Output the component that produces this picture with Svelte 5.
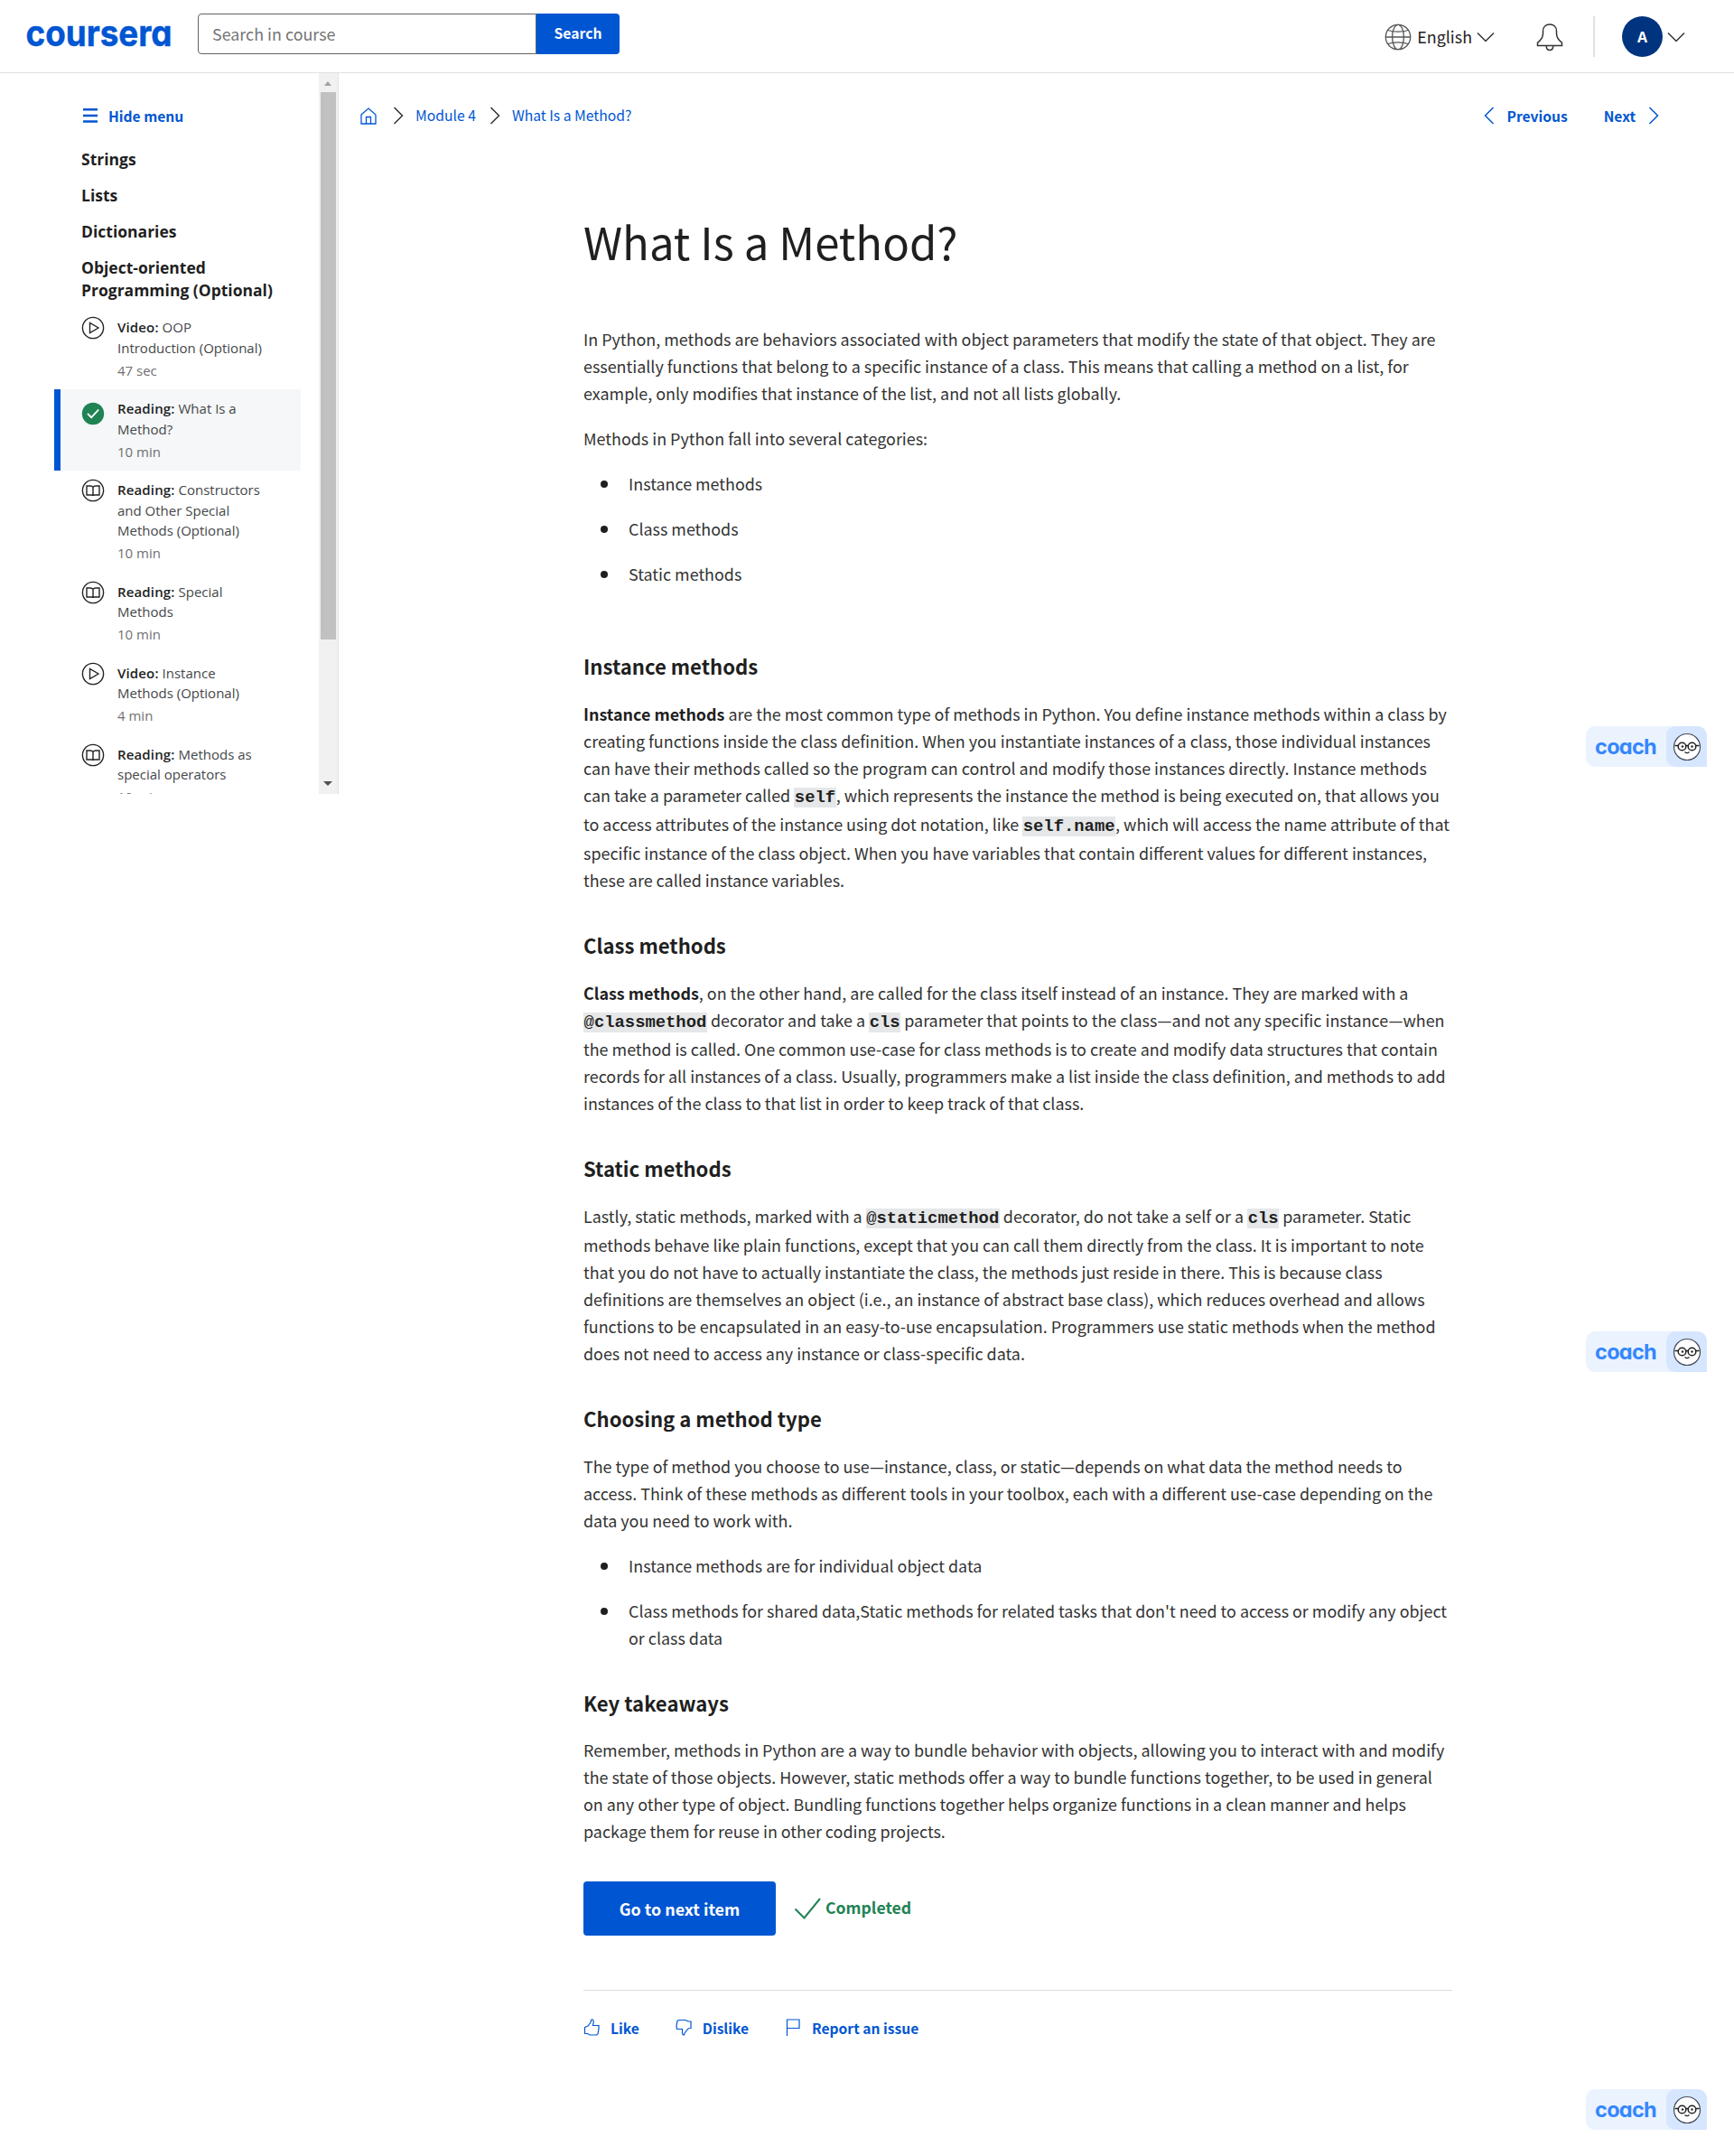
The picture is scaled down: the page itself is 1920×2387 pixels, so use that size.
<script>
  const topics = ['Strings', 'Lists', 'Dictionaries', 'Object-oriented Programming (Optional)'];
  const items = [
    { kind: 'Video', icon: 'play', title: 'OOP Introduction (Optional)', time: '47 sec' },
    { kind: 'Reading', icon: 'done', title: 'What Is a Method?', time: '10 min', active: true },
    { kind: 'Reading', icon: 'book', title: 'Constructors and Other Special Methods (Optional)', time: '10 min' },
    { kind: 'Reading', icon: 'book', title: 'Special Methods', time: '10 min' },
    { kind: 'Video', icon: 'play', title: 'Instance Methods (Optional)', time: '4 min' },
    { kind: 'Reading', icon: 'book', title: 'Methods as special operators', time: '10 min' }
  ];
  const coachSlots = ['first', 'second', 'third'];
</script>

{#snippet chevron(dir)}
  <svg class="chev" width="20" height="20" viewBox="0 0 20 20" fill="none" stroke="currentColor" stroke-width="1.5">
    {#if dir === 'down'}<path d="M1 5.5 10 14.5 19 5.5" />
    {:else if dir === 'left'}<path d="M14.5 1 5.5 10 14.5 19" />
    {:else}<path d="M5.5 1 14.5 10 5.5 19" />{/if}
  </svg>
{/snippet}

<div class="page">
  <header>
    <svg class="logo" width="162" height="36" viewBox="0 0 162 36">
      <text x="-.5" y="29" textLength="162" lengthAdjust="spacingAndGlyphs">coursera</text>
    </svg>
    <div class="search">
      <div class="field">Search in course</div>
      <button class="go">Search</button>
    </div>
    <div class="tools">
      <svg class="globe" width="30" height="30" viewBox="0 0 30 30" fill="none" stroke="#555" stroke-width="1.3">
        <circle cx="15" cy="15" r="13.7" />
        <ellipse cx="15" cy="15" rx="6.4" ry="13.7" />
        <path d="M1.3 15h27.4M4 7.5c6 2.2 16 2.2 22 0M4 22.500c6-2.2 16-2.200 22 0" />
      </svg>
      <span class="lang">English</span>
      {@render chevron('down')}
      <svg class="bell" width="30" height="32" viewBox="0 0 30 32" fill="none" stroke="#333" stroke-width="1.5">
        <path d="M1.500 25.500v-3.200c4-3 6-6.500 6-10.300V9.500C7.500 5 10.500 2 15 2s7.500 3 7.500 7.500V12c0 3.800 2 7.300 6 10.300v3.200zM11.300 26c0 2.700 1.500 4.500 3.700 4.500s3.700-1.800 3.700-4.500" />
      </svg>
      <span class="rule"></span>
      <span class="avatar">A</span>
      {@render chevron('down')}
    </div>
  </header>

  <div class="body">
    <div class="side">
      <nav>
        <div class="hide">
          <svg width="16" height="16" viewBox="0 0 16 16" fill="#0056d2"><path d="M0 0h16v2.500H0zM0 6.700h16v2.500H0zM0 13.300h16v2.500H0z" /></svg>
          <span>Hide menu</span>
        </div>
        {#each topics as t}<h4>{t}</h4>{/each}
        <ul class="items">
          {#each items as it}
            <li class:active={it.active}>
              <svg class="kind" width="26" height="26" viewBox="0 0 26 26" fill="none" stroke="#222" stroke-width="1.4">
                {#if it.icon === 'done'}
                  <circle cx="13" cy="13" r="12.200" fill="#1f8354" stroke="none" />
                  <path d="m7 13 4.200 4.200 8-8.700" stroke="#fff" stroke-width="1.800" />
                {:else if it.icon === 'play'}
                  <circle cx="13" cy="13" r="11.600" />
                  <path d="M9.500 7.400v11.200L19 13z" />
                {:else}
                  <circle cx="13" cy="13" r="11.600" />
                  <path d="M13 9.500C12.500 8.500 11.500 8 10 8H6v10h5c1 0 2 .5 2 1 0-.5 1-1 2-1h5V8h-4c-1.500 0-2.500.5-3 1.500zV19" />
                {/if}
              </svg>
              <div class="info">
                <div><b>{it.kind}:</b> {it.title}</div>
                <div class="time">{it.time}</div>
              </div>
            </li>
          {/each}
        </ul>
      </nav>
      <div class="scroll">
        <i class="up"></i>
        <i class="thumb"></i>
        <i class="down"></i>
      </div>
    </div>

    <main>
      <div class="crumbs">
        <svg class="home" width="18" height="19" viewBox="0 0 18 19" fill="none" stroke="#0056d2" stroke-width="1.300">
          <path d="M1 8 9 1l8 7v10H1zM6.500 18v-7.500h5V18" />
        </svg>
        {@render chevron('right')}
        <a>Module 4</a>
        {@render chevron('right')}
        <a>What Is a Method?</a>
        <div class="pager">
          {@render chevron('left')}
          <b>Previous</b>
          <b class="next">Next</b>
          {@render chevron('right')}
        </div>
      </div>

      <article>
        <h1>What Is a Method?</h1>
        <p>In Python, methods are behaviors associated with object parameters that modify the state of that object. They are<br />essentially functions that belong to a specific instance of a class. This means that calling a method on a list, for<br />example, only modifies that instance of the list, and not all lists globally.</p>
        <p>Methods in Python fall into several categories:</p>
        <ul class="dots">
          <li>Instance methods</li>
          <li>Class methods</li>
          <li>Static methods</li>
        </ul>

        <h2 class="first">Instance methods</h2>
        <p><b>Instance methods</b> are the most common type of methods in Python. You define instance methods within a class by<br />creating functions inside the class definition. When you instantiate instances of a class, those individual instances<br />can have their methods called so the program can control and modify those instances directly. Instance methods<br />can take a parameter called <code>self</code>, which represents the instance the method is being executed on, that allows you<br />to access attributes of the instance using dot notation, like <code>self.name</code>, which will access the name attribute of that<br />specific instance of the class object. When you have variables that contain different values for different instances,<br />these are called instance variables.</p>

        <h2>Class methods</h2>
        <p><b>Class methods</b>, on the other hand, are called for the class itself instead of an instance. They are marked with a<br /><code><span class="at">@</span>classmethod</code> decorator and take a <code>cls</code> parameter that points to the class—and not any specific instance—when<br />the method is called. One common use-case for class methods is to create and modify data structures that contain<br />records for all instances of a class. Usually, programmers make a list inside the class definition, and methods to add<br />instances of the class to that list in order to keep track of that class.</p>

        <h2>Static methods</h2>
        <p>Lastly, static methods, marked with a <code><span class="at">@</span>staticmethod</code> decorator, do not take a self or a <code>cls</code> parameter. Static<br />methods behave like plain functions, except that you can call them directly from the class. It is important to note<br />that you do not have to actually instantiate the class, the methods just reside in there. This is because class<br />definitions are themselves an object (i.e., an instance of abstract base class), which reduces overhead and allows<br />functions to be encapsulated in an easy-to-use encapsulation. Programmers use static methods when the method<br />does not need to access any instance or class-specific data.</p>

        <h2>Choosing a method type</h2>
        <p>The type of method you choose to use—instance, class, or static—depends on what data the method needs to<br />access. Think of these methods as different tools in your toolbox, each with a different use-case depending on the<br />data you need to work with.</p>
        <ul class="dots">
          <li>Instance methods are for individual object data</li>
          <li>Class methods for shared data,Static methods for related tasks that don't need to access or modify any object<br />or class data</li>
        </ul>

        <h2>Key takeaways</h2>
        <p>Remember, methods in Python are a way to bundle behavior with objects, allowing you to interact with and modify<br />the state of those objects. However, static methods offer a way to bundle functions together, to be used in general<br />on any other type of object. Bundling functions together helps organize functions in a clean manner and helps<br />package them for reuse in other coding projects.</p>

        <div class="finish">
          <button class="next-item">Go to next item</button>
          <svg width="30" height="26" viewBox="0 0 30 26" fill="none" stroke="#1f8354" stroke-width="2"><path d="M1.500 13.500 11.500 23.500 29 2" /></svg>
          <span class="completed">Completed</span>
        </div>

        <div class="feedback">
          <span>
            <svg width="18" height="19" viewBox="0 0 18 19" fill="none" stroke="#0056d2" stroke-width="1.200"><path d="M1.500 9.500 5 8 8 4l.8-3h1.500l1 2-.8 4.500H17V11l-1 6-1.500 1H7l-2.500-1.500h-3z" /></svg>
            Like
          </span>
          <span>
            <svg width="18" height="19" viewBox="0 0 18 19" fill="none" stroke="#0056d2" stroke-width="1.200"><path d="M17 10.500 14 11l-4 5-.5 2H8.500L7.500 16.500v-5H1.500L1 8l1-5.500L4 1.500h7l3 1.500h3z" /></svg>
            Dislike
          </span>
          <span>
            <svg width="18" height="19" viewBox="0 0 18 19" fill="none" stroke="#0056d2" stroke-width="1.200"><path d="M2.500 19V1h13.500v9.500H2.500" /></svg>
            Report an issue
          </span>
        </div>
      </article>
    </main>
  </div>

  {#each coachSlots as slot}
    <div class="coach {slot}">
      <span class="word">coach</span>
      <span class="face">
        <svg width="32" height="32" viewBox="0 0 32 32" fill="none" stroke="#222" stroke-width="1.500">
          <circle cx="16" cy="16" r="14.500" fill="#fff" stroke="#444a5a" stroke-width="1.200" />
          <circle cx="10.500" cy="15.500" r="4.300" />
          <circle cx="21.500" cy="15.500" r="4.300" />
          <path d="M14.800 14.500h2.400M2.500 14.500h3.700M25.800 14.500h3.700" />
          <path d="M13.500 21.500c1.500 1.300 3.500 1.300 5 0" stroke-width="1.100" />
          <circle cx="11" cy="15.500" r="1.200" fill="#222" stroke="none" />
          <circle cx="21.500" cy="15.500" r="1.200" fill="#222" stroke="none" />
        </svg>
      </span>
    </div>
  {/each}
</div>

<style>
  :global(body) { margin: 0; background: #fff; }
  .page {
    position: relative;
    box-sizing: border-box;
    height: 2387px;
    overflow: hidden;
    color: #1f1f1f;
    font-family: 'Noto Sans CJK JP', 'Noto Sans CJK SC', sans-serif;
    font-size: 17.9px;
    line-height: 30px;
  }
  svg { display: block; flex: none; }
  ul { list-style: none; margin: 0; padding: 0; }
  button { border: 0; font: inherit; color: #fff; background: #0056d2; font-weight: 700; }

  header {
    display: flex;
    align-items: flex-start;
    box-sizing: border-box;
    height: 81px;
    padding-left: 29px;
    border-bottom: 1px solid #e1e1e1;
  }
  .logo { margin-top: 22px; overflow: visible; }
  .logo text { font: 700 40px Inter, sans-serif; font-feature-settings: 'cv11'; fill: #0056d2; stroke: #0056d2; stroke-width: .5px; }
  .search { display: flex; margin: 15px 0 0 28px; height: 45px; }
  .field {
    box-sizing: border-box;
    width: 375px;
    padding-left: 15px;
    border: 1px solid #636363;
    border-radius: 4px 0 0 4px;
    line-height: 43px;
    color: #757575;
  }
  .go { width: 92px; padding: 0 0 2px; border-radius: 0 4px 4px 0; font-size: 15.700px; }
  .tools { display: flex; align-items: center; margin: 18px 54px 0 auto; height: 45px; color: #333; }
  .lang { margin: 0 5px 1px 6px; color: #1f1f1f; }
  .bell { margin-left: 46px; }
  .rule { width: 2px; height: 45px; margin: 0 30px 0 33px; background: #e1e1e1; }
  .avatar {
    width: 45px;
    height: 45px;
    margin-right: 5px;
    border-radius: 50%;
    background: #00347f;
    color: #fff;
    font: 700 16px/47px 'Open Sans', sans-serif;
    text-align: center;
  }
  .chev { flex: none; }

  .body { display: flex; }
  .side { display: flex; height: 798px; width: 375px; overflow: hidden; }
  nav { width: 273px; padding: 0 20px 0 60px; font-family: 'Open Sans', sans-serif; }
  .hide {
    display: flex;
    align-items: center;
    gap: 12px;
    margin: 32px 0 21px 32px;
    color: #0056d2;
    font: 700 15.600px/30px 'Noto Sans CJK JP', sans-serif;
  }
  h4 { margin: 0 0 15px 30px; font-size: 17.500px; font-weight: 700; line-height: 25px; }
  .items { margin-top: -8px; }
  .items li {
    display: flex;
    gap: 14px;
    padding: 10px 36px 10px 30px;
    font-size: 15px;
    line-height: 22.500px;
    color: #444749;
  }
  .items li.active { padding-left: 23px; border-left: 7px solid #0056d2; background: #f5f7f8; }
  .items li.active .kind { margin-top: 4px; }
  .kind { margin-top: -1px; }
  .info b { font-weight: 600; color: #1f1f1f; letter-spacing: .15px; }
  .time { margin-top: 2.500px; color: #707070; }
  .scroll {
    display: flex;
    flex-direction: column;
    align-items: center;
    box-sizing: border-box;
    width: 22px;
    padding: 9px 1px 9px 0;
    border-right: 1px solid #e1e1e1;
    background: #f1f1f1;
  }
  .up { border: 4px solid transparent; border-top: 0; border-bottom: 5px solid #a3a3a3; margin-bottom: 7px; }
  .thumb { width: 17px; height: 606px; background: #c1c1c1; }
  .down { margin-top: auto; border: 5px solid transparent; border-bottom: 0; border-top: 5px solid #505050; }

  main { flex: 1; }
  .crumbs { display: flex; align-items: center; height: 30px; margin-top: 32px; padding-left: 24px; color: #333; font-size: 15.700px; }
  .crumbs a { color: #0056d2; margin: 0 11px 0 9px; }
  .home { margin-right: 14px; }
  .pager { display: flex; align-items: center; margin: 0 79px 0 auto; color: #0056d2; }
  .pager b { margin: 0 10px; font-size: 15.600px; }
  .pager .next { margin-left: 30px; }

  article { width: 962px; margin-left: 271px; white-space: nowrap; }
  h1 { margin: 84px 0 53px; font-size: 49.100px; font-weight: 400; line-height: 80px; }
  p { margin: 0 0 20px; color: #333; font-size: 17.910px; }
  p b { font-weight: 700; color: #1f1f1f; }
  h2 { margin: 41px 0 21.500px; font-size: 22.120px; font-weight: 700; line-height: 32px; }
  h2.first { margin-top: 71px; }
  code {
    padding: 0 .6px;
    background: #e5e7e8;
    color: #1f1f1f;
    font: 700 18.850px/28.400px 'Liberation Mono', monospace;
  }
  .at { font-weight: 400; }
  .dots li { display: flex; margin-bottom: 20px; color: #333; }
  .dots li::before { content: ''; flex: none; width: 8px; height: 8px; margin: 12px 23px 0 19px; border-radius: 50%; background: #1f1f1f; }
  .finish { display: flex; align-items: center; margin-top: 40.500px; }
  .next-item { width: 213px; height: 60px; margin-right: 20px; border-radius: 4px; }
  .completed { margin: 0 0 2px 5px; color: #1f8354; font-size: 17.600px; font-weight: 700; }
  .feedback { display: flex; gap: 40px; margin-top: 60px; padding-top: 26px; border-top: 1px solid #ddd; color: #0056d2; font-size: 15.600px; font-weight: 700; }
  .feedback span { display: flex; align-items: center; gap: 12px; }

  .coach {
    position: absolute;
    left: 1756px;
    display: flex;
    width: 134px;
    height: 45px;
    border-radius: 10px 10px 0 10px;
    overflow: hidden;
    background: #ebf3ff;
  }
  .coach.first { top: 804px; }
  .coach.second { top: 1474px; }
  .coach.third { top: 2313px; }
  .word { width: 79px; padding-left: 10px; color: #3587fc; font: 700 23.500px/46px Inter, sans-serif; letter-spacing: -.7px; font-feature-settings: 'cv11'; }
  .face { display: flex; align-items: center; justify-content: center; width: 45px; border-radius: 10px 10px 0 10px; background: #d6e6ff; }
</style>
